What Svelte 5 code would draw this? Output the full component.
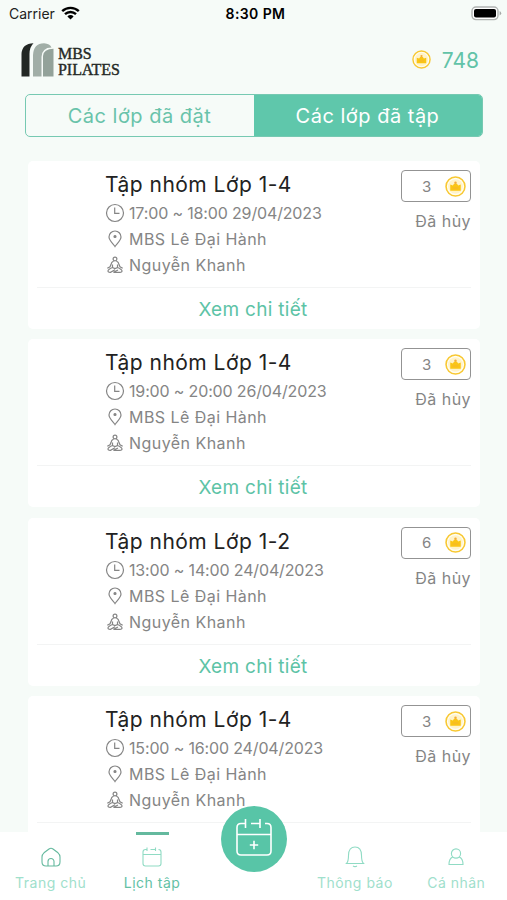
<script>
    const classes = [
        { name: 'Tập nhóm Lớp 1-4', time: '17:00 ~ 18:00 29/04/2023', price: 3 },
        { name: 'Tập nhóm Lớp 1-4', time: '19:00 ~ 20:00 26/04/2023', price: 3 },
        { name: 'Tập nhóm Lớp 1-2', time: '13:00 ~ 14:00 24/04/2023', price: 6 },
        { name: 'Tập nhóm Lớp 1-4', time: '15:00 ~ 16:00 24/04/2023', price: 3 }
    ];

    let tab = 'done';
</script>

{#snippet coin(size)}
    <svg class="coin" width={size} height={size} viewBox="0 0 20 20">
        <circle cx="10" cy="10" r="9" fill="#fffdf2" stroke="#f8c832" stroke-width="1.5" />
        <circle cx="10" cy="10" r="7" fill="#fff3c8" />
        <path d="M5 8.2L7.500 9 8.600 7.300H11.400L12.500 9 15 8.2V14H5z" fill="#fac515" />
        <circle cx="10" cy="6.400" r="1.200" fill="#f3ad3a" />
        <path d="M7.500 11.500H12.500" stroke="#f3ad3a" stroke-width="0.700" />
    </svg>
{/snippet}

<div class="screen">
    <div class="status">
        <div class="network">
            <span class="carrier">Carrier</span>
            <svg width="19" height="14" viewBox="0 0 19 14">
                <path d="M1.2 5.2a12 12 0 0 1 16.6 0M4 8.2a8 8 0 0 1 11 0" fill="none" stroke="#000" stroke-width="2.4" />
                <path d="M9.5 13.6L6.4 10.4a4.4 4.4 0 0 1 6.2 0z" />
            </svg>
        </div>
        <span class="clock">8:30 PM</span>
        <svg class="battery" width="31" height="15" viewBox="0 0 31 15">
            <rect x="1" y="1" width="26" height="12.6" rx="4" fill="#fff" stroke="#b0b3b1" stroke-width="1.4" />
            <rect x="3" y="3" width="22" height="8.6" rx="2" />
            <path d="M28.6 5v4.6q1.6-.8 1.6-2.3T28.6 5z" fill="#a5a8a6" />
        </svg>
    </div>

    <header>
        <div class="brand">
            <svg width="34" height="35" viewBox="0 0 34 35">
                <path d="M0.5 34.5V12Q1 1.500 12.500 1.200Q8.500 5 8.500 12V34.500z" fill="#222724" />
                <path d="M12 34.500V13Q12.500 1.500 23 1.200Q29 1.500 30.500 5.500Q21 5.500 20.500 15V34.500z" fill="#a1aea7" />
                <path d="M22 34.500V14Q22.500 7 32.500 6.800V34.500z" fill="#93a29a" />
            </svg>
            <div class="brand-name"><span>MBS</span><span>PILATES</span></div>
        </div>
        <div class="balance">{@render coin(19)}<span>748</span></div>
    </header>

    <div class="tabs">
        <button class:active={tab === 'booked'} on:click={() => (tab = 'booked')}>Các lớp đã đặt</button>
        <button class:active={tab === 'done'} on:click={() => (tab = 'done')}>Các lớp đã tập</button>
    </div>

    <main>
        {#each classes as item}
            <article>
                <div class="body">
                    <div class="info">
                        <h2>{item.name}</h2>
                        <div class="row time">
                            <svg width="20" height="20" viewBox="0 0 20 20">
                                <circle cx="10" cy="10" r="8.500" />
                                <path d="M9.700 4.500V10.300H14.500" />
                            </svg>
                            <span>{item.time}</span>
                        </div>
                        <div class="row place">
                            <svg width="20" height="20" viewBox="0 0 20 20">
                                <path d="M10 17.500C8.500 15 4 11.500 4 8a6 6 0 0 1 12 0C16 11.500 11.500 15 10 17.500z" />
                                <circle cx="10" cy="7.500" r="1" fill="#858585" />
                            </svg>
                            <span>MBS Lê Đại Hành</span>
                        </div>
                        <div class="row trainer">
                            <svg width="20" height="20" viewBox="0 0 20 20">
                                <circle cx="10" cy="4" r="1.900" />
                                <path d="M8.700 6Q6.300 7 6 9.500L5 11.800 2.300 13.200M11.300 6Q13.700 7 14 9.500L15 11.800l2.700 1.400M7.500 9.500V12.500L10 13.600 12.500 12.500V9.500M7.500 12.500Q3 14.500 3 16T5.500 17.300L10 14.800M12.500 12.500Q17 14.500 17 16T14.500 17.300H8.500L13 15" />
                            </svg>
                            <span>Nguyễn Khanh</span>
                        </div>
                    </div>
                    <div class="side">
                        <div class="price"><span>{item.price}</span>{@render coin(21)}</div>
                        <p>Đã hủy</p>
                    </div>
                </div>
                <div class="detail">Xem chi tiết</div>
            </article>
        {/each}
    </main>

    <nav>
        <div class="item home">
            <svg width="22" height="22" viewBox="0 0 22 22">
                <path d="M4 6.800L9 3Q11 1.600 13 3L18 6.800Q20 8.500 20 11V16Q20 20 16 20H6Q2 20 2 16V11Q2 8.500 4 6.800zM8 20V15.500a3 3 0 0 1 6 0V20" />
            </svg>
            <span>Trang chủ</span>
        </div>
        <div class="item current">
            <svg width="22" height="22" viewBox="0 0 22 22">
                <path d="M6 3.500H4.500Q2 3.500 2 6V17.500Q2 20 4.500 20H17.500Q20 20 20 17.500V6Q20 3.500 17.500 3.500M2 8.500H20M6 1.500V5M14.500 1.500V5M9.500 3.500H14.500" />
            </svg>
            <span>Lịch tập</span>
        </div>
        <div class="item middle">
            <button class="book">
                <svg width="38" height="40" viewBox="0 0 38 40">
                    <path d="M10.500 5.500H6Q2 5.500 2 9.500V33Q2 37 6 37H32Q36 37 36 33V9.500Q36 5.500 32 5.500H30M2 16.500H36M10.500 1V10M25 1V10M16 5.500H25M19 22.800V31.200M14.800 27H23.200" />
                </svg>
            </button>
        </div>
        <div class="item notice">
            <svg width="22" height="22" viewBox="0 0 22 22">
                <path d="M2.500 17.500Q4.500 15.500 4.500 9.500C4.500 4 7 1 11 1S17.500 4 17.500 9.500Q17.500 15.500 19.500 17.500zM9 20q2 1.200 4 0" />
            </svg>
            <span>Thông báo</span>
        </div>
        <div class="item me">
            <svg width="22" height="22" viewBox="0 0 22 22">
                <circle cx="11" cy="7.500" r="4.600" />
                <path d="M7.800 11Q4 12.500 4 18.500H18Q18 12.500 14.200 11" />
            </svg>
            <span>Cá nhân</span>
        </div>
    </nav>
</div>

<style>
    :global(body) {
        margin: 0;
        background: #f6fbf8;
    }

    .screen {
        height: 900px;
        display: flex;
        flex-direction: column;
        overflow: hidden;
        background: #f6fbf8;
        font-family: Inter, "Noto Sans", sans-serif;
    }

    .status {
        display: grid;
        grid-template-columns: 1fr auto 1fr;
        align-items: center;
        height: 26px;
        padding: 0 5px 0 9px;
        font-size: 14px;
    }

    .network {
        display: flex;
        align-items: center;
        gap: 6px;
    }

    .carrier {
        color: #222;
    }

    .clock {
        font-weight: 600;
        font-size: 14px;
        letter-spacing: 0.400px;
        white-space: nowrap;
    }

    .battery {
        justify-self: end;
    }

    header {
        display: flex;
        justify-content: space-between;
        height: 68px;
        padding: 0 28px 0 21px;
        box-sizing: border-box;
    }

    .brand {
        display: flex;
        height: 35px;
        margin-top: 16px;
        gap: 3px;
    }

    .brand-name {
        display: flex;
        flex-direction: column;
        padding-top: 4px;
        font-family: "Liberation Serif", serif;
        font-size: 16px;
        line-height: 16px;
        color: #252a27;
        letter-spacing: -0.050px;
        -webkit-text-stroke: 0.400px #252a27;
    }

    .balance {
        display: flex;
        align-items: center;
        gap: 11px;
        height: 68px;
        color: #62c3a8;
        font-size: 21px;
    }

    .balance .coin {
        margin-bottom: 2px;
    }

    .tabs {
        display: flex;
        flex: none;
        height: 43px;
        margin: 0 24px 0 25px;
        box-sizing: border-box;
        border: 1.500px solid #76c9b2;
        border-radius: 5px;
        overflow: hidden;
    }

    .tabs button {
        flex: 1;
        padding: 0 1px 0 0;
        border: 0;
        background: none;
        font: 20px Inter, sans-serif;
        letter-spacing: 0.500px;
        color: #69c3aa;
    }

    .tabs button.active {
        background: #5fc7ab;
        color: #fff;
    }

    main {
        flex: 1;
        min-height: 0;
        padding: 24px 27px 0 28px;
        overflow: hidden;
    }

    article {
        height: 168px;
        margin-bottom: 10.400px;
        padding: 0 9px;
        box-sizing: border-box;
        border-radius: 5px;
        background: #fff;
    }

    .body {
        display: flex;
        justify-content: space-between;
        height: 127px;
        box-sizing: border-box;
        padding: 9px 0 0 68px;
        border-bottom: 1px solid #f3f4f4;
    }

    .info {
        padding-top: 1px;
    }

    h2 {
        margin: 0 0 1px;
        font-size: 21px;
        line-height: 28px;
        font-weight: 400;
        letter-spacing: 0.480px;
        color: #222;
    }

    .row {
        display: flex;
        align-items: center;
        gap: 4px;
        height: 26px;
        color: #858585;
        font-size: 16px;
        letter-spacing: 0.450px;
    }

    .time {
        letter-spacing: -0.150px;
    }

    .row svg {
        fill: none;
        stroke: #858585;
        stroke-width: 1.200;
    }

    .side {
        display: flex;
        flex-direction: column;
        align-items: flex-end;
    }

    .price {
        display: flex;
        align-items: center;
        justify-content: space-between;
        width: 70px;
        height: 32px;
        padding: 0 4px 0 20px;
        box-sizing: border-box;
        border: 1.500px solid #939393;
        border-radius: 4px;
        color: #858585;
        font-size: 15px;
    }

    .side p {
        margin: 9px 0 0;
        font-size: 16px;
        line-height: 20px;
        letter-spacing: 0.450px;
        color: #858585;
    }

    .detail {
        padding: 8px 2px 0 0;
        line-height: 28px;
        font-size: 19px;
        letter-spacing: 0.300px;
        text-align: center;
        color: #5dc3a6;
    }

    nav {
        display: grid;
        grid-template-columns: repeat(5, 1fr);
        flex: none;
        height: 68px;
        background: #fff;
    }

    .item {
        display: flex;
        flex-direction: column;
        align-items: center;
        gap: 6px;
        height: 68px;
        box-sizing: border-box;
        padding-top: 14px;
        color: #9fe0cc;
        font-size: 14px;
        line-height: 18px;
        letter-spacing: 0.500px;
    }

    .item svg {
        fill: none;
        stroke: #90dbc4;
        stroke-width: 1.100;
        flex: none;
    }

    .home svg {
        stroke: #64b99e;
    }

    .current {
        color: #63c1a5;
    }

    .current::before {
        content: "";
        width: 33px;
        height: 3px;
        margin: -14px 0 5px;
        background: #64b99e;
    }

    .middle {
        padding: 0;
    }

    .book {
        position: relative;
        flex: none;
        width: 66px;
        height: 66px;
        margin: -26px 0 0 1px;
        padding: 0;
        border: 0;
        border-radius: 50%;
        background: #58c5a7;
    }

    .item .book svg {
        display: block;
        margin: -2px auto 0;
        stroke: #fff;
        stroke-width: 1.600;
    }
</style>
